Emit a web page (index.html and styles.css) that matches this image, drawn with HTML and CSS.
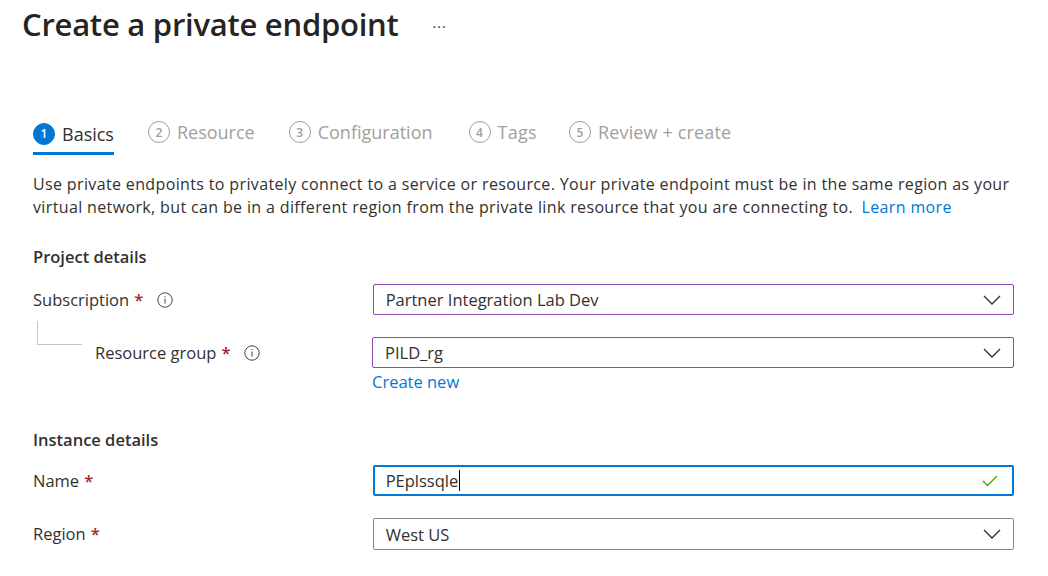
FILE: index.html
```html
<!DOCTYPE html>
<html>
<head>
<meta charset="utf-8">
<link rel="stylesheet" href="styles.css">
</head>
<body>
<div class="page">
  <header class="title-bar">
    <h1 class="title">Create a private endpoint</h1>
    <span class="more">···</span>
  </header>

  <nav class="tabs">
    <div class="tab active"><span class="num">1</span><span class="tab-label">Basics</span></div>
    <div class="tab"><span class="num">2</span><span class="tab-label">Resource</span></div>
    <div class="tab"><span class="num">3</span><span class="tab-label">Configuration</span></div>
    <div class="tab t4"><span class="num">4</span><span class="tab-label">Tags</span></div>
    <div class="tab t5"><span class="num">5</span><span class="tab-label">Review + create</span></div>
  </nav>

  <p class="desc">Use private endpoints to privately connect to a service or resource. Your private endpoint must be in the same region as your virtual network, but can be in a different region from the private link resource that you are connecting to. <a class="link" href="#">Learn more</a></p>

  <h2 class="section">Project details</h2>

  <div class="row row-sub">
    <div class="label">Subscription <span class="req">*</span>
      <svg class="info" viewBox="0 0 16 16" width="16" height="16"><circle cx="8" cy="8" r="7.2" fill="none" stroke="#444" stroke-width="1"/><rect x="7.5" y="6.6" width="1" height="5" fill="#444"/><circle cx="8" cy="4.6" r="0.7" fill="#444"/></svg>
    </div>
    <div class="control select purple"><span>Partner Integration Lab Dev</span>
      <svg class="chev" viewBox="0 0 18 10" width="18" height="10"><path d="M1 1 L9 9 L17 1" fill="none" stroke="#323130" stroke-width="1.3"/></svg>
    </div>
  </div>

  <div class="row row-rg">
    <div class="label nested"><span class="tree"></span>Resource group <span class="req">*</span>
      <svg class="info" viewBox="0 0 16 16" width="16" height="16"><circle cx="8" cy="8" r="7.2" fill="none" stroke="#444" stroke-width="1"/><rect x="7.5" y="6.6" width="1" height="5" fill="#444"/><circle cx="8" cy="4.6" r="0.7" fill="#444"/></svg>
    </div>
    <div class="control-wrap">
      <div class="control select purple"><span>PILD_rg</span>
        <svg class="chev" viewBox="0 0 18 10" width="18" height="10"><path d="M1 1 L9 9 L17 1" fill="none" stroke="#323130" stroke-width="1.3"/></svg>
      </div>
      <a class="link create-new" href="#">Create new</a>
    </div>
  </div>

  <h2 class="section section-inst">Instance details</h2>

  <div class="row row-name">
    <div class="label">Name <span class="req">*</span></div>
    <div class="control focused"><span>PEplssqle</span><span class="caret"></span>
      <svg class="check" viewBox="0 0 16 12" width="16" height="12"><path d="M1 6 L5.5 10.5 L15 1" fill="none" stroke="#57a300" stroke-width="1.4"/></svg>
    </div>
  </div>

  <div class="row row-region">
    <div class="label">Region <span class="req">*</span></div>
    <div class="control select gray"><span>West US</span>
      <svg class="chev" viewBox="0 0 18 10" width="18" height="10"><path d="M1 1 L9 9 L17 1" fill="none" stroke="#323130" stroke-width="1.3"/></svg>
    </div>
  </div>
</div>
</body>
</html>
```

FILE: styles.css
```css
* { box-sizing: border-box; }
html, body { margin: 0; padding: 0; background: #fff; }
body {
  font-family: "Open Sans", "Noto Sans", "Liberation Sans", sans-serif;
  color: #323130;
  font-size: 16px;
}
.page { padding: 0 34px 0 33px; width: 1048px; }

.title-bar { display: flex; align-items: center; height: 48px; margin-left: -11px; }
.title { margin: 0; font-size: 31px; font-weight: 600; color: #252423; letter-spacing: -0.25px; }
.more { margin-left: 34px; font-size: 14px; color: #323130; letter-spacing: 1px; position: relative; top: 2px; }

.tabs { display: flex; margin-top: 64px; height: 43px; }
.tab { display: flex; align-items: center; height: 40px; margin-right: 34px; color: #a19f9d; font-size: 18px; }
.tab .num {
  width: 22px; height: 22px; border-radius: 50%;
  border: 1.5px solid #a19f9d; display: inline-flex; align-items: center; justify-content: center;
  font-size: 12px; margin-right: 7px; font-weight: 600;
}
.tab.t4 { margin-left: 2px; }
.tab.t4 .tab-label { letter-spacing: 0.3px; }
.tab.t5 { margin-left: -2px; }
.tab.t5 .tab-label { letter-spacing: 0.15px; }
.tab.active { color: #323130; border-bottom: 3px solid #0078d4; height: 43px; padding-top: 3px; }
.tab.active .num { background: #0078d4; border-color: #0078d4; color: #fff; }

.desc { margin: 18px 0 0; font-size: 16px; line-height: 23px; color: #323130; width: 980px; letter-spacing: 0.36px; }
.link { color: #0078d4; text-decoration: none; }
.desc .link { margin-left: 4px; }

.section { margin: 26px 0 0; font-size: 16.5px; font-weight: 600; color: #323130; line-height: 24px; }
.section-inst { margin-top: 35px; }

.row { display: flex; align-items: flex-start; }
.label { width: 340px; display: flex; align-items: center; height: 31px; font-size: 16.5px; position: relative; }
.req { color: #a4262c; margin-left: 5px; font-weight: 600; }
.info { margin-left: 14px; }
.label.nested { padding-left: 62px; }
.tree { position: absolute; left: 4px; top: -16px; width: 45px; height: 24px; border-left: 1px solid #c8c6c4; border-bottom: 1px solid #c8c6c4; }

.control {
  width: 642px; height: 31px; border: 1px solid #8a8886; border-radius: 2px;
  display: flex; align-items: center; padding: 0 12px; font-size: 16.5px; color: #323130; position: relative;
}
.control > span:first-child { flex: none; }
.control .chev { margin-left: auto; }
.purple { border-color: #8c47b0; }
.gray { border-color: #8a8886; }
.focused { border: 2px solid #0078d4; padding-left: 11px; }
.caret { width: 1px; height: 21px; background: #000; margin-left: 1px; }
.check { margin-left: auto; margin-right: 2px; }

.row-sub { margin-top: 15px; }
.row-rg { margin-top: 22px; }
.create-new { display: block; font-size: 16.5px; margin-top: 3px; line-height: 22px; }
.row-name { margin-top: 13px; }
.row-region { margin-top: 22px; }
.row-region .control { height: 32px; }
```
